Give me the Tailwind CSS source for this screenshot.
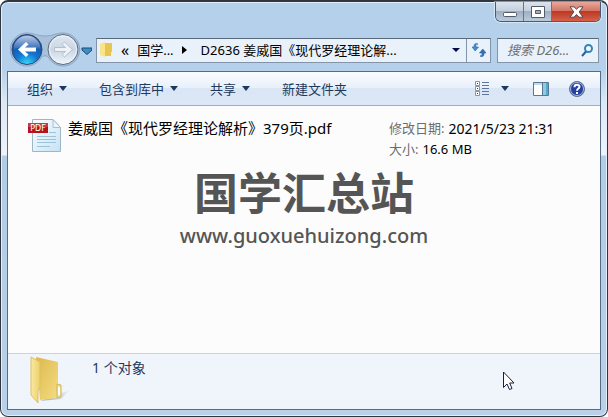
<!DOCTYPE html>
<html lang="zh-CN">
<head>
    <meta charset="UTF-8">
    <meta name="viewport" content="width=device-width, initial-scale=1.0">
    <title>国学汇总站</title>
    <script src="https://cdn.jsdelivr.net/npm/@tailwindcss/browser@4"></script>
</head>
<body class="min-h-screen flex bg-white font-['Noto_Sans','Noto_Sans_CJK_SC',sans-serif] text-[13px] leading-5 text-[#1e395b]">
    <div class="relative flex-1 flex flex-col rounded-lg border border-t-2 border-[#30363f] bg-[linear-gradient(to_bottom,#b4d0ea_0px,#b4d0ea_68px,#dce8f5_100px,#eef3fb_153px,#b1cce5_154px,#b8d0e8_100%)] px-[6px] pb-[6px] shadow-[inset_0_0_0_1px_#e3effa]">

        <!-- Caption buttons -->
        <div class="absolute top-0 right-[6px] flex h-5 rounded-b-md border border-t-0 border-[#4d5a6b] overflow-hidden shadow-[0_0_1px_1px_#ffffff80]">
            <button aria-label="最小化" class="w-7 flex justify-center items-center border-r border-[#65758a] bg-[linear-gradient(#dbe4ee_0%,#c3cfdc_48%,#9fb0c3_50%,#b9cbdd_100%)]">
                <svg width="14" height="12" viewBox="0 0 14 12"><rect x=".5" y="6.5" width="13" height="4" rx="1" fill="#fff" stroke="#545b66"/></svg>
            </button>
            <button aria-label="最大化" class="w-7 flex justify-center items-center border-r border-[#65758a] bg-[linear-gradient(#dbe4ee_0%,#c3cfdc_48%,#9fb0c3_50%,#b9cbdd_100%)]">
                <svg width="14" height="12" viewBox="0 0 14 12"><path d="M.5.500h13v11H.5zM4.500 4.500v3h5v-3z" fill="#fff" fill-rule="evenodd" stroke="#545b66"/></svg>
            </button>
            <button aria-label="关闭" class="w-12 flex justify-center items-center bg-[linear-gradient(#e6a99c_0%,#d4725f_48%,#bd3924_50%,#d4604a_100%)]">
                <svg width="15" height="12" viewBox="0 0 15 12"><path d="M1 .8h4l2.500 2.400L10 .8h4L10.200 5.900 14 11.200h-4L7.500 8.500 5 11.200H1l3.800-5.300z" fill="#fff" stroke="#59474d"/></svg>
            </button>
        </div>

        <!-- Navigation row -->
        <div class="flex items-center mt-[30px] pl-[3px] pr-[2px] h-9">
            <svg class="shrink-0" width="82" height="36" viewBox="0 0 82 36">
                <defs>
                    <radialGradient id="back" cx=".5" cy="1" r=".95"><stop offset="0" stop-color="#35e0ff"/><stop offset=".4" stop-color="#1478cf"/><stop offset="1" stop-color="#123f92"/></radialGradient>
                    <linearGradient id="gloss" x2="0" y2="1"><stop offset="0" stop-color="#e4effb"/><stop offset="1" stop-color="#3b6db4"/></linearGradient>
                    <linearGradient id="fwd" x2="0" y2="1"><stop offset="0" stop-color="#dfe8f2"/><stop offset=".5" stop-color="#c9d6e4"/><stop offset="1" stop-color="#f0f6fb"/></linearGradient>
                </defs>
                <path d="M17 1c7 0 10 3 18 3S46 1 53 1a16.500 16.500 0 1 1-14 25c-2-3-6-3-8 0A16.500 16.500 0 1 1 17 1z" fill="#a9c0da" stroke="#8da5c2"/>
                <circle cx="17" cy="17.500" r="15" fill="url(#back)" stroke="#2b4774"/>
                <path d="M3.500 17a13.500 13.500 0 0 1 27 0c-9-2.500-18-2.500-27 0z" fill="url(#gloss)" opacity=".8"/>
                <path d="M8 17.500l8-7.500 2.500 2.500-3.500 3h11v4H15l3.500 3L16 25z" fill="#fff"/>
                <circle cx="53" cy="17.500" r="15" fill="url(#fwd)" stroke="#5d6a7c"/>
                <circle cx="53" cy="17.500" r="13.500" fill="none" stroke="#edf4fb"/>
                <path d="M62.500 17.500L54.500 10 52 12.500l3.500 3h-11v4h11l-3.500 3 2.500 2.500z" fill="#edf2f7" stroke="#b3bfcc"/>
                <path d="M72 16h10v2l-5 4.500-5-4.500z" fill="#3b8fc6" stroke="#1d476f"/>
            </svg>
            <nav aria-label="地址" class="flex flex-1 min-w-0 h-[25px] ml-1 items-center border border-t-[#59697c] border-[#8294a9] bg-[#e9f1fa] text-black">
                <svg class="ml-[3px] shrink-0" width="13" height="16" viewBox="0 0 13 16"><path d="M4 1h8v13H4z" fill="#e6c650"/><path d="M11 10h2v4h-2z" fill="#f8f2cf"/><path d="M0 2l5-2v15l-5-2z" fill="#f8e48e"/></svg>
                <span class="ml-2 text-base leading-5">«</span>
                <a href="#" class="ml-2 whitespace-nowrap">国学...</a>
                <svg class="ml-2 shrink-0" width="5" height="8"><path d="M0 0l5 4-5 4z"/></svg>
                <a href="#" class="ml-[14px] flex-1 min-w-0 whitespace-nowrap">D2636 姜威国《现代罗经理论解...</a>
                <button aria-label="历史记录" class="w-5 h-full flex items-center justify-center"><svg width="8" height="4"><path d="M0 0h8L4 4z" fill="#07074b"/></svg></button>
                <button aria-label="刷新" class="w-6 h-full flex items-center justify-center border-l border-[#8294a9]">
                    <svg width="14" height="14" viewBox="0 0 14 14"><path d="M6 1C3.500 1.500 4 3 4 4h2.500L3.200 8 0 4h2c0-3 1-4.500 4-3z" fill="#3f8fd0" stroke="#2c69a8" stroke-width=".6"/><path d="M8 13c2.500-.5 2-2 2-3H7.500l3.300-4L14 10h-2c0 3-1 4.500-4 3z" fill="#2f72bd" stroke="#265a9c" stroke-width=".6"/></svg>
                </button>
            </nav>
            <label class="flex items-center w-[102px] h-[25px] ml-[6px] pl-[9px] pr-[5px] border border-t-[#59697c] border-[#8294a9] bg-[#e9f1fa]">
                <input type="search" aria-label="搜索" placeholder="搜索 D26..." class="flex-1 min-w-0 italic outline-none placeholder:text-[#6d6d6d]">
                <svg class="shrink-0" width="12" height="13" viewBox="0 0 12 13"><circle cx="7.500" cy="4.500" r="3.500" fill="#eef8ff" stroke="#3484b8" stroke-width="2"/><path d="M5 7.500L1 12" stroke="#2d5b9b" stroke-width="2"/></svg>
            </label>
        </div>

        <!-- Client area -->
        <div class="flex-1 flex flex-col mt-[3px] border border-[#566b86] bg-[#fcfcfc]">
            <div class="flex items-center h-[34px] pl-[19px] pr-[15px] border-b border-[#a0afc3] bg-[linear-gradient(#fafcff_0%,#e8f0fb_48%,#dae6f5_50%,#dce8f6_100%)]">
                <button class="flex items-center gap-[6px]">组织<svg width="8" height="5"><path d="M0 0h8L4 5z" fill="#1e395b"/></svg></button>
                <button class="flex items-center gap-[6px] ml-8">包含到库中<svg width="8" height="5"><path d="M0 0h8L4 5z" fill="#1e395b"/></svg></button>
                <button class="flex items-center gap-[6px] ml-8">共享<svg width="8" height="5"><path d="M0 0h8L4 5z" fill="#1e395b"/></svg></button>
                <button class="ml-8">新建文件夹</button>
                <button aria-label="更改视图" class="flex items-center gap-3 ml-auto">
                    <svg width="14" height="16" viewBox="0 0 14 16"><path d="M.5.500h4v4h-4zM.5 5.500h4v4h-4zM.5 10.500h4v4h-4z" fill="#fff" stroke="#8794a3"/><path d="M2 2h1v1H2zM2 7h1v1H2zM2 12h1v1H2z" fill="#246"/><path d="M7 1.500h7M7 4.500h7M7 7.500h7M7 10.500h7M7 13.500h7" stroke="#5b78a0"/></svg>
                    <svg width="8" height="5"><path d="M0 0h8L4 5z" fill="#1e395b"/></svg>
                </button>
                <button aria-label="预览窗格" class="ml-6"><svg width="16" height="14" viewBox="0 0 16 14"><path d="M.5.500h15v13H.5z" fill="#fff" stroke="#567696"/><path d="M1 1h14v2H1z" fill="#c9d9e8"/><path d="M10 1h5v12h-5z" fill="#8ccbe0"/><path d="M13 1h2v12h-2z" fill="#57a9c9"/><path d="M9.500 1v12" stroke="#567696"/></svg></button>
                <button aria-label="帮助" class="ml-5"><svg width="16" height="16" viewBox="0 0 16 16"><circle cx="8" cy="8" r="7.500" fill="#2340a0" stroke="#66748f"/><circle cx="8" cy="8" r="6.500" fill="none" stroke="#a9b9db"/><path d="M5.500 6.200C5.500 3 10.700 3.200 10.500 6 10.400 7.500 8 7.800 8 9.800M8 11v2" fill="none" stroke="#fff" stroke-width="2"/></svg></button>
            </div>

            <main class="flex-1 pt-3">
                <div class="flex items-start pl-5 text-black">
                    <svg class="shrink-0 mt-px" width="34" height="34" viewBox="0 0 34 34">
                        <defs><linearGradient id="page" x2="1" y2="1"><stop offset="0" stop-color="#fdfeff"/><stop offset="1" stop-color="#c5e3f3"/></linearGradient></defs>
                        <path d="M4.500.500H25l7.500 8v24h-28z" fill="url(#page)" stroke="#9db6ca"/>
                        <path d="M25 .5v8h7.500z" fill="#e9f4fb" stroke="#a6bfd1"/>
                        <path d="M21 13.500h7M9 17.500h19M9 20.500h19M9 23.500h19M9 27.500h13" stroke="#9bc4dc"/>
                        <path d="M0 4h20v10H0z" fill="#b5141b"/><path d="M0 4h20v4H0z" fill="#cb3b3b"/>
                        <text x="10" y="12" text-anchor="middle" font-family="DejaVu Sans" font-size="8" fill="#fff">PDF</text>
                    </svg>
                    <a href="#" class="ml-[6px] flex-1 text-[15px] leading-5">姜威国《现代罗经理论解析》379页.pdf</a>
                    <dl class="w-[211px] leading-[21px]">
                        <div class="flex gap-1"><dt class="text-[#6d6d6d]">修改日期:</dt><dd class="text-sm leading-[21px]">2021/5/23 21:31</dd></div>
                        <div class="flex gap-1"><dt class="text-[#6d6d6d]">大小:</dt><dd>16.6 MB</dd></div>
                    </dl>
                </div>
                <div class="flex flex-col items-center mt-1 text-center text-[#555]">
                    <p class="text-[44px] leading-[58px] font-bold">国学汇总站</p>
                    <p class="text-xl leading-7 font-medium">www.guoxuehuizong.com</p>
                </div>
            </main>

            <footer class="relative flex items-start h-[56px] pl-5 border-t border-[#c9d4e2] bg-[#f0f4fb]">
                <svg class="shrink-0 mt-[2px]" width="44" height="50" viewBox="0 0 44 50">
                    <defs>
                        <linearGradient id="fold" x2="1" y2="0"><stop offset="0" stop-color="#fbe9a0"/><stop offset="1" stop-color="#ecd06c"/></linearGradient>
                        <linearGradient id="foldback" x2="1" y2="1"><stop offset="0" stop-color="#dcb84c"/><stop offset="1" stop-color="#f4dd83"/></linearGradient>
                        <linearGradient id="shade" x2="1" y2="0"><stop offset=".4" stop-color="#b4bcc9"/><stop offset="1" stop-color="#f0f4fb"/></linearGradient>
                    </defs>
                    <path d="M12 45l30-11-9 9z" fill="url(#shade)"/>
                    <path d="M8 1l22 5v36l-18 2z" fill="url(#foldback)"/>
                    <path d="M29 28l4 1v12l-4 1z" fill="#f2df91" stroke="#cfb75f"/><path d="M30 31h2v8h-2z" fill="#fff"/>
                    <path d="M3 1l9 5v25l-2 3v13l-7-8z" fill="url(#fold)" stroke="#dfc05c"/>
                </svg>
                <p class="ml-5 mt-1 text-sm">1 个对象</p>
                <!-- Mouse pointer -->
                <svg class="absolute right-[85px] top-[17px]" width="12" height="20" viewBox="0 0 12 20"><path d="M.5 1v15.500L4 13l2.500 5.500 2.500-1L6.700 12H11z" fill="#fff" stroke="#182037"/></svg>
            </footer>
        </div>
    </div>
</body>
</html>
